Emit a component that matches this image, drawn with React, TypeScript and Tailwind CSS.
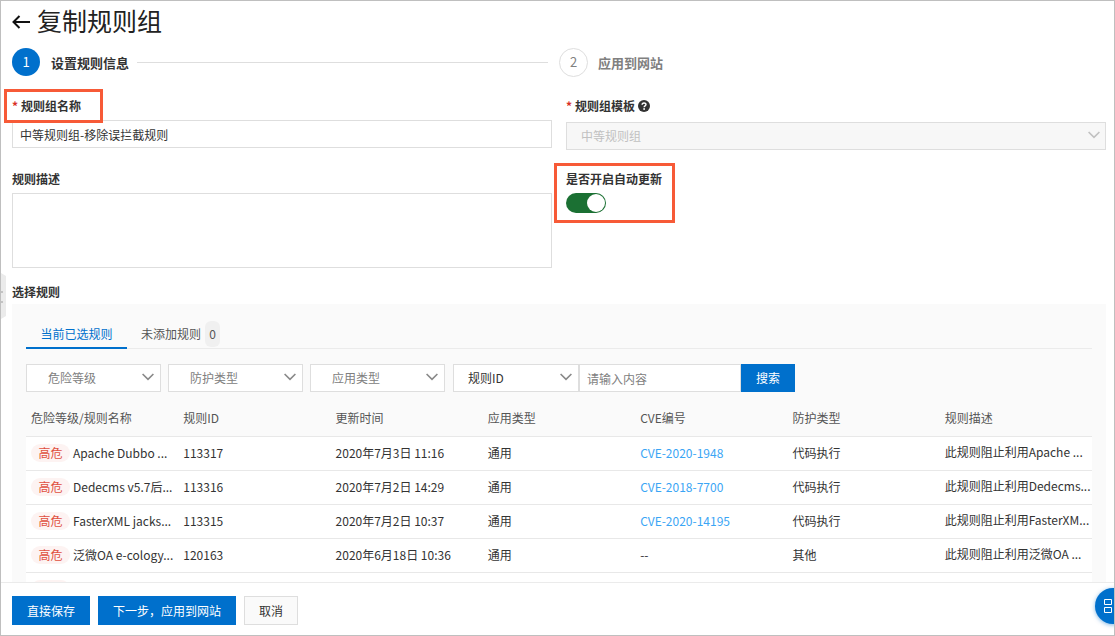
import { ReactNode, useState } from "react"

type Rule = {
  level: string
  name: string
  id: string
  updated: string
  app: string
  cve: string
  protection: string
  description: string
}

const columns = ["危险等级/规则名称", "规则ID", "更新时间", "应用类型", "CVE编号", "防护类型", "规则描述"]

const rules: Rule[] = [
  { level: "高危", name: "Apache Dubbo ...", id: "113317", updated: "2020年7月3日 11:16", app: "通用", cve: "CVE-2020-1948", protection: "代码执行", description: "此规则阻止利用Apache ..." },
  { level: "高危", name: "Dedecms v5.7后...", id: "113316", updated: "2020年7月2日 14:29", app: "通用", cve: "CVE-2018-7700", protection: "代码执行", description: "此规则阻止利用Dedecms..." },
  { level: "高危", name: "FasterXML jacks...", id: "113315", updated: "2020年7月2日 10:37", app: "通用", cve: "CVE-2020-14195", protection: "代码执行", description: "此规则阻止利用FasterXM..." },
  { level: "高危", name: "泛微OA e-cology...", id: "120163", updated: "2020年6月18日 10:36", app: "通用", cve: "", protection: "其他", description: "此规则阻止利用泛微OA ..." },
]

function Chevron({ className }: { className: string }) {
  return (
    <svg viewBox="0 0 12 8" className={`pointer-events-none absolute h-2 w-3 ${className}`} fill="none" stroke="currentColor" strokeWidth="1.6">
      <path d="M0.6 1 6 6.4 11.4 1" />
    </svg>
  )
}

function Filter({ label, className }: { label: string; className: string }) {
  return (
    <div className="relative">
      <select aria-label={label} className={`block h-7 appearance-none border border-[#dedede] bg-white outline-none ${className}`}>
        <option>{label}</option>
      </select>
      <Chevron className="top-[9px] right-[7px] text-[#888]" />
    </div>
  )
}

function Highlight({ className }: { className: string }) {
  return <span className={`pointer-events-none absolute border-3 border-[#f75a37] ${className}`} />
}

function LevelTag({ children }: { children?: ReactNode }) {
  return (
    <span className="h-[18px] w-[39px] shrink-0 rounded-full bg-[#fdf3f2] text-center text-[#e0503f]">
      {children}
    </span>
  )
}

function Steps() {
  return (
    <ol className="mt-1.5 flex h-7 text-[13px] font-bold">
      <li className="flex flex-1 items-center">
        <span className="flex size-7 items-center justify-center rounded-full bg-[#0070cc] font-normal text-white">1</span>
        <span className="ml-[11px] pt-0.5 text-[#333]">设置规则信息</span>
        <span className="mr-[11px] ml-2 h-px flex-1 bg-[#dedede]" />
      </li>
      <li className="flex flex-1 items-center">
        <span className="flex size-[29px] items-center justify-center rounded-full border border-[#dedede] font-normal text-[#808080]">2</span>
        <span className="ml-2.5 pt-0.5 text-[#808080]">应用到网站</span>
      </li>
    </ol>
  )
}

function RuleTable() {
  return (
    <table className="mt-2 w-full table-fixed border-collapse text-left">
      <thead>
        <tr className="h-9 border-b border-[#e8e8e8] text-[#555]">
          {columns.map((column) => (
            <th key={column} className="p-0 pl-[5px] font-normal">{column}</th>
          ))}
        </tr>
      </thead>
      <tbody className="bg-white">
        {rules.map((rule) => (
          <tr key={rule.id} className="h-[34px] border-b border-[#e8e8e8] whitespace-nowrap">
            <td className="p-0 pl-[5px]">
              <div className="flex gap-[3px]">
                <LevelTag>{rule.level}</LevelTag>
                {rule.name}
              </div>
            </td>
            <td className="p-0 pl-[5px]">{rule.id}</td>
            <td className="p-0 pl-[5px]">{rule.updated}</td>
            <td className="p-0 pl-[5px]">{rule.app}</td>
            <td className="p-0 pl-[5px]">
              {rule.cve ? <a href="#" className="text-[#3aa5f5]">{rule.cve}</a> : "--"}
            </td>
            <td className="p-0 pl-[5px]">{rule.protection}</td>
            <td className="p-0 pb-[3px] pl-[5px]">{rule.description}</td>
          </tr>
        ))}
        <tr className="h-[34px]">
          <td colSpan={7} className="p-0 pl-[5px]">
            <div className="flex">
              <LevelTag />
            </div>
          </td>
        </tr>
      </tbody>
    </table>
  )
}

export default function App() {
  const [name, setName] = useState("中等规则组-移除误拦截规则")
  const [autoUpdate, setAutoUpdate] = useState(true)

  return (
    <div className="relative flex h-screen flex-col overflow-hidden border border-[#bfbfbf] bg-white font-['Noto_Sans_CJK_SC',sans-serif] text-xs leading-[18px] text-[#333]">
      <main className="min-h-0 flex-1 overflow-hidden pr-2 pl-[11px]">
        <header className="flex h-[41px] items-center gap-[7px]">
          <a href="#" aria-label="返回">
            <svg viewBox="0 0 18 14" className="h-3.5 w-[18px]" fill="none" stroke="#111" strokeWidth="2">
              <path d="M18 7H1.5M7.5 1 1.5 7l6 6" />
            </svg>
          </a>
          <h1 className="pb-1 text-[25px] leading-8 text-[#222]">复制规则组</h1>
        </header>

        <Steps />

        <form className="mt-[21px] grid grid-cols-2 gap-x-3.5 gap-y-5">
          <div>
            <div className="relative">
              <Highlight className="-top-2 -left-2 h-[34px] w-[99px]" />
              <label htmlFor="name" className="flex gap-[3px] font-bold">
                <span className="text-[#d93026]">*</span>规则组名称
              </label>
            </div>
            <input
              id="name"
              value={name}
              onChange={(e) => setName(e.target.value)}
              className="mt-[5px] block h-7 w-full border border-[#dedede] px-[7px] outline-none"
            />
          </div>
          <div>
            <label htmlFor="template" className="flex items-center gap-[3px] font-bold">
              <span className="text-[#d93026]">*</span>规则组模板
              <svg viewBox="0 0 12 12" className="size-3">
                <circle cx="6" cy="6" r="6" fill="#333" />
                <path d="M4.1 4.8C4.1 2.3 8 2.4 8 4.6 8 6 6.1 5.9 6.1 7.3" fill="none" stroke="#fff" strokeWidth="1.4" />
                <circle cx="6.1" cy="9" r="0.9" fill="#fff" />
              </svg>
            </label>
            <div className="relative mt-[7px]">
              <select id="template" disabled className="block h-7 w-full appearance-none border border-[#dedede] bg-[#f7f7f7] px-3.5 text-[#c1c1c1] opacity-100">
                <option>中等规则组</option>
              </select>
              <Chevron className="top-[9px] right-1.5 text-[#c1c1c1]" />
            </div>
          </div>
          <div>
            <label htmlFor="description" className="block font-bold">规则描述</label>
            <textarea id="description" className="mt-[5px] block h-[75px] w-full resize-none border border-[#dedede] outline-none" />
          </div>
          <div className="relative self-start">
            <Highlight className="-top-[7px] -left-3 h-[60px] w-[121px]" />
            <label htmlFor="auto-update" className="block font-bold">是否开启自动更新</label>
            <input
              id="auto-update"
              type="checkbox"
              role="switch"
              checked={autoUpdate}
              onChange={(e) => setAutoUpdate(e.target.checked)}
              className="mt-[5px] flex h-5 w-10 appearance-none items-center rounded-full bg-[#c1c1c1] px-px before:size-[18px] before:rounded-full before:bg-white checked:justify-end checked:bg-[#1b7033]"
            />
          </div>
        </form>

        <h2 className="mt-[15px] font-bold">选择规则</h2>
        <section className="mt-[3px] bg-[#fafafa] px-3.5 pt-[17px]">
          <div role="tablist" className="flex h-7 shadow-[inset_0_-1px_0_#ebebeb]">
            <button role="tab" aria-selected="true" className="w-[101px] border-b-2 border-[#0070cc] text-[#0070cc]">
              当前已选规则
            </button>
            <button role="tab" aria-selected="false" className="ml-3.5 flex h-[26px] items-center gap-1 text-[#555]">
              未添加规则
              <span className="flex h-full w-[15px] items-center justify-center rounded-md bg-[#f0f0f0]">0</span>
            </button>
          </div>

          <div className="mt-[15px] flex">
            <div className="mr-2 flex gap-[7px]">
              <Filter label="危险等级" className="w-[135px] pl-[21px] text-[#808080]" />
              <Filter label="防护类型" className="w-[135px] pl-[21px] text-[#808080]" />
              <Filter label="应用类型" className="w-[135px] pl-[21px] text-[#808080]" />
            </div>
            <Filter label="规则ID" className="w-[126px] pl-3.5" />
            <input
              aria-label="规则ID"
              placeholder="请输入内容"
              className="h-7 w-[162px] border border-[#dedede] bg-white px-[7px] outline-none placeholder:text-[#808080]"
            />
            <button className="h-7 bg-[#0070cc] px-[15px] text-white">搜索</button>
          </div>

          <RuleTable />
        </section>
      </main>

      <footer className="flex gap-2 border-t border-[#ebebeb] bg-white pt-[13px] pb-2.5 pl-[11px]">
        <button className="h-[29px] bg-[#0070cc] px-[15px] text-white">直接保存</button>
        <button className="h-[29px] bg-[#0070cc] px-[15px] text-white">下一步，应用到网站</button>
        <button className="h-[29px] border border-[#dedede] bg-[#fafafa] px-3.5">取消</button>
      </footer>

      <button aria-label="展开侧栏" className="absolute top-[272px] left-0">
        <svg viewBox="0 0 5 46" className="h-[46px] w-[5px]">
          <path d="M0 0 5 3V43L0 46Z" fill="#ebebeb" />
          <path d="M0 19h2M1 18v2M0 29h2M1 28v2" stroke="#b5b5b5" />
        </svg>
      </button>
      <button aria-label="快捷工具" className="absolute -right-[17px] bottom-[11px] size-9 rounded-full bg-[#0070cc] pl-[9px] shadow-[0_1px_4px_#0070cc80]">
        <svg viewBox="0 0 8 16" className="h-4 w-2" fill="none" stroke="#fff">
          <path d="M0.5 1.5h7v5h-7zM0.5 9.5h7v5h-7z" />
        </svg>
      </button>
    </div>
  )
}
